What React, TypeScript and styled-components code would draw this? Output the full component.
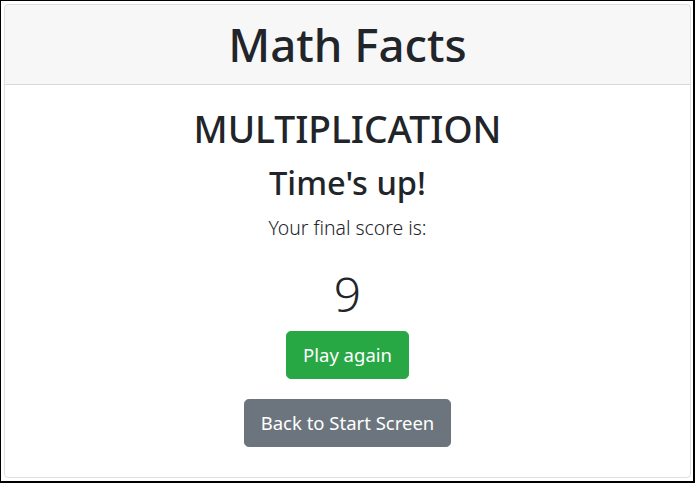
import React from "react";
import styled, { createGlobalStyle } from "styled-components";

const Global = createGlobalStyle`
  html, body { margin: 0; padding: 0; background: #fff; }
  body {
    font-family: "Noto Sans", "Open Sans", sans-serif;
    color: #212529;
  }
  * { box-sizing: border-box; }
`;

const Frame = styled.div`
  height: 100vh;
  border-style: solid;
  border-color: #000;
  border-width: 1px 2px 2px 1px;
  padding: 3px 2px 3px 3px;
  background: #fff;
`;

const Card = styled.div`
  height: 100%;
  display: flex;
  flex-direction: column;
  border: 1px solid rgba(0, 0, 0, 0.125);
  border-radius: 4px;
  overflow: hidden;
`;

const Header = styled.header`
  padding: 12px 20px;
  background: rgba(0, 0, 0, 0.03);
  border-bottom: 1px solid rgba(0, 0, 0, 0.125);
  text-align: center;
`;

const Title = styled.h1`
  margin: 0;
  font-size: 45.7px;
  line-height: 55px;
  font-weight: 500;
`;

const Body = styled.main`
  flex: 1;
  padding: 20px;
  display: flex;
  flex-direction: column;
  align-items: center;
  text-align: center;
`;

const Operation = styled.h2`
  margin: 0;
  font-size: 37.2px;
  line-height: 48px;
  font-weight: 500;
`;

const Status = styled.h3`
  margin: 11px 0 0;
  font-size: 32.6px;
  line-height: 38px;
  font-weight: 500;
`;

const Lead = styled.p`
  margin: 11px 0 0;
  font-size: 19.4px;
  line-height: 30px;
  font-weight: 300;
`;

const Score = styled.div`
  margin: 22px 0 0;
  font-size: 48px;
  line-height: 58px;
  font-weight: 300;
`;

const Button = styled.button<{ $variant: "success" | "secondary"; $gap: number }>`
  margin-top: ${(p) => p.$gap}px;
  font-family: inherit;
  font-size: 18.5px;
  line-height: 30px;
  font-weight: 400;
  padding: 8px 16px;
  border: 1px solid ${(p) => (p.$variant === "success" ? "#28a745" : "#6c757d")};
  background: ${(p) => (p.$variant === "success" ? "#28a745" : "#6c757d")};
  color: #fff;
  border-radius: 4.8px;
  cursor: pointer;
`;

export default function App() {
  return (
    <>
      <Global />
      <Frame>
        <Card>
          <Header>
            <Title>Math Facts</Title>
          </Header>
          <Body>
            <Operation>MULTIPLICATION</Operation>
            <Status>Time's up!</Status>
            <Lead>Your final score is:</Lead>
            <Score>9</Score>
            <Button $variant="success" $gap={8}>Play again</Button>
            <Button $variant="secondary" $gap={20}>Back to Start Screen</Button>
          </Body>
        </Card>
      </Frame>
    </>
  );
}
